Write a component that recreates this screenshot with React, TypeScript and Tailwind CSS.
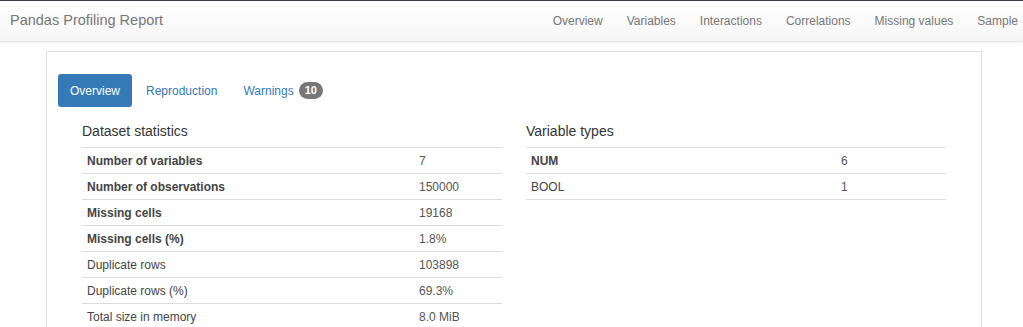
const NAV = ["Overview", "Variables", "Interactions", "Correlations", "Missing values", "Sample"];

type Row = { label: string; value: string; bold?: boolean };

const DATASET: Row[] = [
  { label: "Number of variables", value: "7", bold: true },
  { label: "Number of observations", value: "150000", bold: true },
  { label: "Missing cells", value: "19168", bold: true },
  { label: "Missing cells (%)", value: "1.8%", bold: true },
  { label: "Duplicate rows", value: "103898" },
  { label: "Duplicate rows (%)", value: "69.3%" },
  { label: "Total size in memory", value: "8.0 MiB" },
];

const TYPES: Row[] = [
  { label: "NUM", value: "6", bold: true },
  { label: "BOOL", value: "1" },
];

function StatTable({ title, rows, labelWidth }: { title: string; rows: Row[]; labelWidth: string }) {
  return (
    <div className="w-[420px]">
      <h4 className="h-[26px] text-[14px] leading-[20px] text-[#333]">{title}</h4>
      <div className="border-t border-[#ddd]">
        {rows.map((r) => (
          <div key={r.label} className="flex h-[26px] items-center border-b border-[#ddd] text-[12px]">
            <div className={`${labelWidth} shrink-0 px-[5px] ${r.bold ? "font-bold text-[#444]" : "text-[#444]"}`}>{r.label}</div>
            <div className="px-[5px] text-[#555]">{r.value}</div>
          </div>
        ))}
      </div>
    </div>
  );
}

export default function App() {
  return (
    <div className="min-h-screen overflow-hidden bg-white" style={{ fontFamily: '"Liberation Sans", Arial, sans-serif' }}>
      <nav className="flex h-[42px] items-center justify-between border-t border-[#3a3f4b] border-b border-b-[#e2e2e2] bg-gradient-to-b from-white to-[#f6f6f6] shadow-[0_1px_3px_rgba(0,0,0,0.06)]">
        <div className="pl-[10px] text-[14.5px] text-[#777]">Pandas Profiling Report</div>
        <ul className="-mr-[7px] flex shrink-0 text-[12px] text-[#777]">
          {NAV.map((n) => (
            <li key={n} className="px-[12px]">{n}</li>
          ))}
        </ul>
      </nav>

      <div className="ml-[46px] mt-[9px] w-[936px] border border-[#ddd] border-b-0 px-[11px] pt-[22px] pb-[20px]">
        <ul className="flex items-center gap-[2px] text-[12px]">
          <li className="flex h-[33px] items-center rounded-[3px] bg-[#337ab7] px-[12px] text-white">Overview</li>
          <li className="flex h-[33px] items-center px-[12px] text-[#337ab7]">Reproduction</li>
          <li className="flex h-[33px] items-center px-[12px] text-[#337ab7]">
            Warnings
            <span className="ml-[5px] flex h-[17px] items-center rounded-full bg-[#777] px-[6px] text-[11px] font-bold text-white">10</span>
          </li>
        </ul>
        <div className="mt-[14px] flex gap-[24px] px-[24px]">
          <StatTable title="Dataset statistics" rows={DATASET} labelWidth="w-[332px]" />
          <StatTable title="Variable types" rows={TYPES} labelWidth="w-[310px]" />
        </div>
      </div>
    </div>
  );
}
